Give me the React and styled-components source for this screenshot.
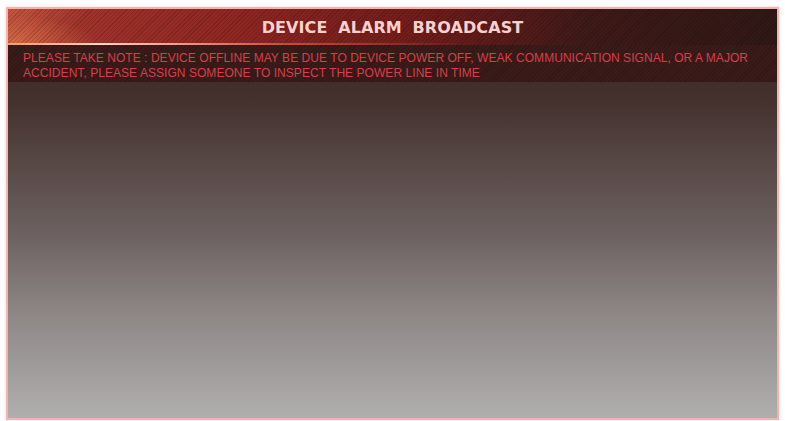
import React from 'react';
import styled, { createGlobalStyle } from 'styled-components';

const GlobalStyle = createGlobalStyle`
  html, body {
    margin: 0;
    padding: 0;
    background: #ffffff;
  }
  body {
    width: 785px;
    height: 421px;
    overflow: hidden;
  }
`;

const stripes = `repeating-linear-gradient(
  135deg,
  rgba(0, 0, 0, 0.14) 0px,
  rgba(0, 0, 0, 0.14) 1px,
  rgba(0, 0, 0, 0) 1px,
  rgba(0, 0, 0, 0) 3px
)`;

const Page = styled.div`
  padding: 7px 6px 1px 6px;
  height: 421px;
  box-sizing: border-box;
`;

const Frame = styled.div`
  height: 413px;
  box-sizing: border-box;
  border: 2px solid #f2b4b0;
  box-shadow: 0 0 3px rgba(250, 180, 175, 0.6);
  display: flex;
  flex-direction: column;
  background: linear-gradient(180deg, #392321 0%, #44312e 22%, #6c6160 55%, #8e8887 75%, #b0aeae 100%);
  overflow: hidden;
`;

const Header = styled.div`
  position: relative;
  height: 36px;
  display: flex;
  align-items: center;
  justify-content: center;
  background:
    ${stripes},
    radial-gradient(ellipse 80px 40px at 0px 0px, rgba(255, 140, 100, 0.35), rgba(255, 140, 100, 0) 100%),
    radial-gradient(ellipse 90px 30px at 0px 36px, rgba(255, 150, 90, 0.55), rgba(255, 150, 90, 0) 100%),
    linear-gradient(90deg, #a8392e 0%, #8e2622 30%, #6e1c1a 55%, #3e1a18 75%, #301816 100%);
  &::after {
    content: '';
    position: absolute;
    left: 0;
    bottom: 0;
    width: 460px;
    height: 2px;
    background: linear-gradient(90deg, rgba(255, 200, 150, 0.6) 0%, rgba(255, 230, 200, 0.95) 20%, rgba(240, 110, 70, 0.6) 60%, rgba(200, 60, 40, 0) 100%);
  }
`;

const Title = styled.h1`
  margin: 0;
  font-family: "DejaVu Sans", sans-serif;
  font-weight: bold;
  font-size: 16px;
  letter-spacing: 0.1px;
  word-spacing: 5px;
  color: #f6d2cf;
  text-shadow: 0 0 2px rgba(120, 20, 20, 0.6);
`;

const Notice = styled.div`
  height: 37px;
  box-sizing: border-box;
  padding: 6px 14px 0 15px;
  background: ${stripes}, #3a1b19;
  font-family: "Liberation Sans", Arial, sans-serif;
  font-size: 12px;
  line-height: 15px;
  letter-spacing: 0.05px;
  color: #d6404a;
`;

export default function App() {
  return (
    <Page>
      <GlobalStyle />
      <Frame>
        <Header>
          <Title>DEVICE ALARM BROADCAST</Title>
        </Header>
        <Notice>
          PLEASE TAKE NOTE : DEVICE OFFLINE MAY BE DUE TO DEVICE POWER OFF, WEAK COMMUNICATION SIGNAL, OR A MAJOR
          ACCIDENT, PLEASE ASSIGN SOMEONE TO INSPECT THE POWER LINE IN TIME
        </Notice>
      </Frame>
    </Page>
  );
}
